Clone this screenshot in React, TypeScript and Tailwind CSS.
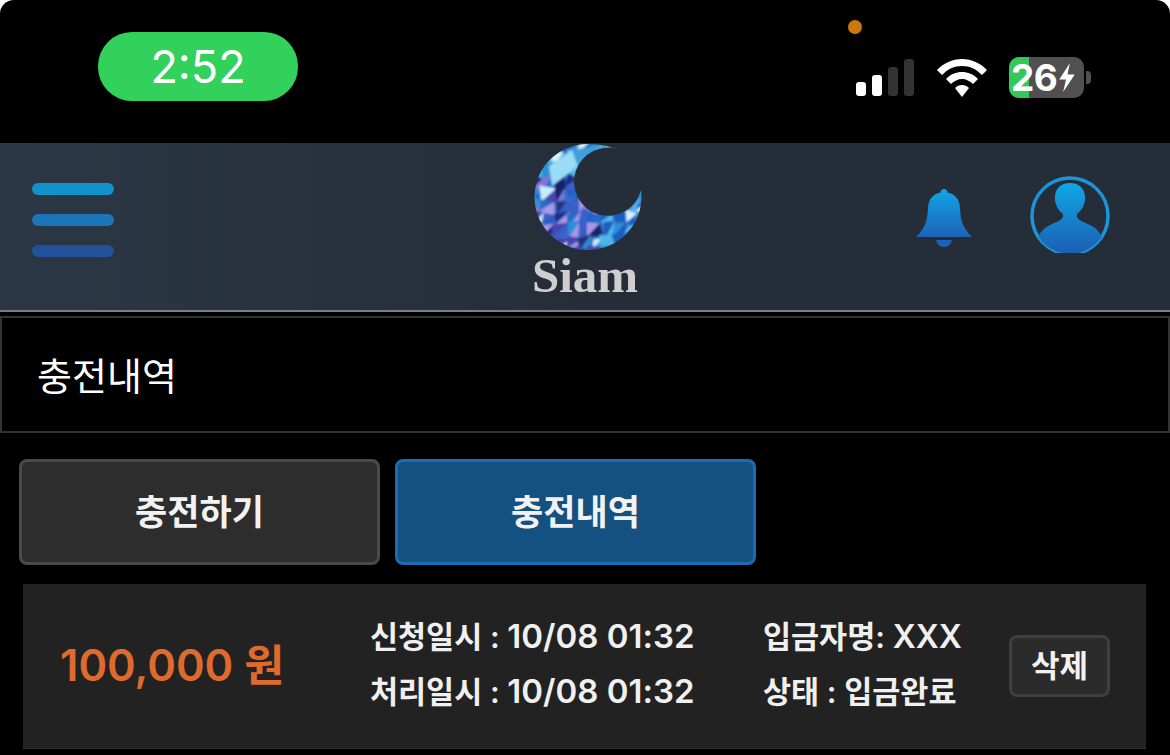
const palette = ["#1d2f8a", "#2b5cc8", "#4a45b0", "#7f74d8", "#1f6fc8", "#2a8fd8", "#a898e8", "#16206a", "#3a5fc8", "#2a2f80"];
const cells: { points: string; fill: string }[] = [];
let seed = 11;
const rnd = () => {
  seed = (seed * 16807) % 2147483647;
  return seed / 2147483647;
};
for (let y = 140; y < 256; y += 12) {
  for (let x = 530; x < 646; x += 12) {
    const jx = () => x + rnd() * 7 - 3.5;
    const jy = () => y + rnd() * 7 - 3.5;
    const a = `${jx()},${jy()}`;
    const b = `${jx() + 13},${jy()}`;
    const c = `${jx()},${jy() + 13}`;
    const d = `${jx() + 13},${jy() + 13}`;
    const arc = x > 590 || y < 170;
    const pick = () => {
      const r = rnd();
      if (arc) return r < 0.4 ? "#2a8fd8" : r < 0.7 ? "#4fb6e8" : r < 0.92 ? "#1f5cc0" : "#d8f2fb";
      return r > 0.93 ? "#c8ecf8" : palette[Math.floor((r / 0.93) * palette.length)];
    };
    cells.push({ points: `${a} ${b} ${c}`, fill: pick() });
    cells.push({ points: `${b} ${d} ${c}`, fill: pick() });
  }
}

function Moon() {
  return (
    <svg width="110" height="110" viewBox="532 143 110 110" className="block shrink-0">
      <defs>
        <clipPath id="moonClip">
          <path d="M641 190 A34 34 0 1 1 620 150 Q606 144 588 144 A53.5 53 0 1 0 641 190 Z" />
        </clipPath>
        <filter id="moonBlur">
          <feGaussianBlur stdDeviation="0.8" />
        </filter>
      </defs>
      <g clipPath="url(#moonClip)">
        <g filter="url(#moonBlur)">
          <rect x="530" y="140" width="115" height="115" fill="#3570c4" />
          {cells.map((cell) => (
            <polygon key={cell.points} points={cell.points} fill={cell.fill} />
          ))}
          <polygon points="549,166 572,150 578,166 552,186" fill="#9bdcf6" />
          <polygon points="572,150 604,144 586,158 578,166" fill="#3f9fdc" />
        </g>
      </g>
    </svg>
  );
}

function Bell() {
  return (
    <svg width="58" height="60" viewBox="0 0 58 60" className="block">
      <defs>
        <linearGradient id="bellGrad" x1="0" y1="0" x2="0" y2="1">
          <stop offset="0" stopColor="#0fa7e6" />
          <stop offset="1" stopColor="#1c62b8" />
        </linearGradient>
      </defs>
      <path
        d="M29 0 C31 0 32.5 1.5 32.5 3.5 C40 5 44.5 10 45 19 C45.5 32 48 39 57 48 L1 48 C10 39 12.5 32 13 19 C13.5 10 18 5 25.5 3.5 C25.5 1.5 27 0 29 0 Z"
        fill="url(#bellGrad)"
      />
      <path d="M21 51 L37 51 C36 55.5 33 58 29 58 C25 58 22 55.5 21 51 Z" fill="#1c62b8" />
    </svg>
  );
}

function Avatar() {
  return (
    <svg width="80" height="77" viewBox="0 0 80 77" className="block">
      <defs>
        <linearGradient id="userGrad" x1="0" y1="0" x2="0" y2="1">
          <stop offset="0" stopColor="#0fa7e6" />
          <stop offset="1" stopColor="#1c5cb0" />
        </linearGradient>
        <clipPath id="userClip">
          <circle cx="40" cy="40" r="38" />
        </clipPath>
      </defs>
      <circle cx="40" cy="40" r="38" fill="none" stroke="#1a96d8" strokeWidth="3.5" />
      <g clipPath="url(#userClip)">
        <path
          d="M40 7 C50 7 56 14 55 24 C54 31 51 35 47 38 L47 41 C49 45 54 46 60 49 C66 52 70 56 72 62 L72 80 L8 80 L8 62 C10 56 14 52 20 49 C26 46 31 45 33 41 L33 38 C29 35 26 31 25 24 C24 14 30 7 40 7 Z"
          fill="url(#userGrad)"
        />
      </g>
    </svg>
  );
}

function Row({ left, time, right, rightLatin }: { left: string; time: string; right: string; rightLatin?: string }) {
  return (
    <div className="flex items-center h-[28px] text-[30.5px] font-semibold text-[#f0f0f0] whitespace-nowrap">
      <span className="w-[393px]">
        {left}
        <span className="text-[33px]">{time}</span>
      </span>
      <span>
        {right}
        {rightLatin ? <span className="text-[32px]">{rightLatin}</span> : null}
      </span>
    </div>
  );
}

export default function App() {
  return (
    <div
      className="w-[1170px] h-[755px] overflow-hidden bg-white text-white"
      style={{ fontFamily: 'Inter, "Noto Sans CJK KR", sans-serif' }}
    >
      <div className="h-full bg-black rounded-tl-[14px] rounded-tr-[14px] flex flex-col">
        <div className="h-[143px] shrink-0 flex items-start justify-between">
          <div className="ml-[98px] mt-[32px] w-[200px] h-[69px] rounded-[34px] bg-[#32d15c] flex items-center justify-center text-[45px] font-normal leading-none">
            2:52
          </div>
          <div className="relative mr-[79px] mt-[57px] flex items-start">
            <div className="absolute left-[-8px] top-[-37px] w-[14px] h-[14px] rounded-full bg-[#c97a0a]"></div>
            <div className="flex items-end gap-[6px] h-[39px]">
              <div className="w-[10px] h-[14px] rounded-[3px] bg-white"></div>
              <div className="w-[10px] h-[21px] rounded-[3px] bg-white"></div>
              <div className="w-[10px] h-[29px] rounded-[3px] bg-[#333333]"></div>
              <div className="w-[10px] h-[37px] rounded-[3px] bg-[#333333]"></div>
            </div>
            <svg width="50" height="38" viewBox="0 0 50 38" className="block ml-[23px] mt-[2px]">
              <path d="M25 0 C35 0 43 4 50 11 L45 16 C39 10 33 7 25 7 C17 7 11 10 5 16 L0 11 C7 4 15 0 25 0 Z" fill="#fff" />
              <path d="M25 13 C31 13 36 15 41 20 L36 25 C33 22 29 20 25 20 C21 20 17 22 14 25 L9 20 C14 15 19 13 25 13 Z" fill="#fff" />
              <path d="M25 26 C28 26 30 27 32 29 L25 38 L18 29 C20 27 22 26 25 26 Z" fill="#fff" />
            </svg>
            <div className="flex items-center gap-[2px] ml-[22px]">
              <div className="relative w-[75px] h-[41px] rounded-[10px] bg-[#505050] flex items-center">
                <div className="absolute left-0 top-0 bottom-0 w-[20px] rounded-l-[10px] bg-[#34c759]"></div>
                <span className="relative ml-[2px] text-[37px] font-bold leading-none tracking-[-0.5px]">26</span>
                <svg width="18" height="29" viewBox="0 0 16 30" className="relative block ml-[1px]">
                  <path d="M11 0 L0 17 H7 L4 30 L16 12 H8.5 Z" fill="#fff" />
                </svg>
              </div>
              <div className="w-[5px] h-[13px] rounded-r-[4px] bg-[#505050]"></div>
            </div>
          </div>
        </div>

        <header className="h-[169px] shrink-0 bg-gradient-to-r from-[#2b3745] via-[#252e38] to-[#252e38] border-b-2 border-[#7a7f85] flex items-center justify-between relative">
          <div className="ml-[32px] flex flex-col gap-[19px] -mt-[14px]">
            <div className="w-[82px] h-[12px] rounded-full bg-[#1292cc]"></div>
            <div className="w-[82px] h-[12px] rounded-full bg-[#1a76b8]"></div>
            <div className="w-[82px] h-[12px] rounded-full bg-[#1f5298]"></div>
          </div>
          <div className="absolute left-[532px] top-0 flex flex-col items-center w-[110px]">
            <Moon />
            <span
              className="mt-[0px] mr-[4px] text-[49px] font-bold leading-[46px] text-[#cfcfcf]"
              style={{ fontFamily: '"Liberation Serif", serif' }}
            >
              Siam
            </span>
          </div>
          <div className="mr-[60px] flex items-start gap-[57px] -mt-[10px]">
            <div className="mt-[-1px]"><Bell /></div>
            <div className="mt-[-14px]"><Avatar /></div>
          </div>
        </header>

        <div className="mt-[4px] h-[117px] shrink-0 border-2 border-[#333333] flex items-center pl-[35px] pt-[3px] text-[38px] font-normal">
          충전내역
        </div>

        <div className="mt-[26px] ml-[19px] flex gap-[15px] shrink-0">
          <button className="w-[361px] h-[106px] rounded-[8px] border-[3px] border-[#4a4a4a] bg-[#2d2d2d] text-[35px] font-bold text-[#f2f2f2]">
            충전하기
          </button>
          <button className="w-[361px] h-[106px] rounded-[8px] border-[3px] border-[#1b6cb0] bg-[#155180] text-[35px] font-bold text-[#f2f2f2]">
            충전내역
          </button>
        </div>

        <div className="mt-[19px] ml-[23px] w-[1123px] h-[165px] shrink-0 bg-[#222222] border-b border-[#333333] flex items-center relative">
          <div className="w-[347px] pl-[37px] text-[43.5px] font-semibold text-[#de6a2e] whitespace-nowrap">100,000 원</div>
          <div className="flex flex-col gap-[27px] -mt-[3px]">
            <Row left="신청일시 : " time="10/08 01:32" right="입금자명: " rightLatin="XXX" />
            <Row left="처리일시 : " time="10/08 01:32" right="상태 : 입금완료" />
          </div>
          <button className="absolute right-[36px] top-[51px] w-[101px] h-[62px] rounded-[8px] border-[3px] border-[#3f3f3f] bg-[#2b2b2b] text-[31px] font-semibold text-[#f2f2f2]">
            삭제
          </button>
        </div>
      </div>
    </div>
  );
}
